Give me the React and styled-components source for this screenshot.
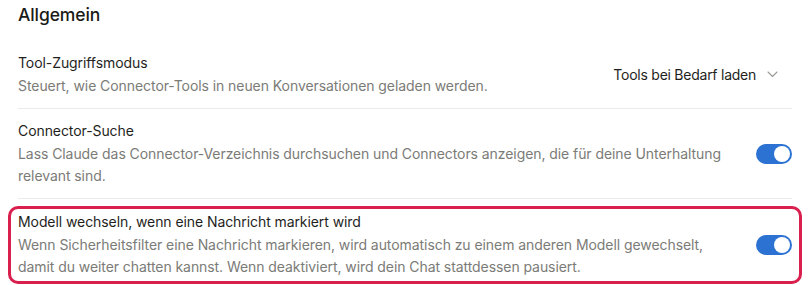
import React, { useState } from "react";
import styled, { createGlobalStyle } from "styled-components";

const Global = createGlobalStyle`
  html, body { margin: 0; padding: 0; background: #ffffff; }
  body { font-family: Inter, "Noto Sans", sans-serif; -webkit-font-smoothing: antialiased; }
`;

const Page = styled.div`
  width: 810px;
  padding: 3px 18px 0 18px;
  box-sizing: border-box;
`;

const Heading = styled.h2`
  margin: 0;
  font-size: 17.5px;
  line-height: 24px;
  font-weight: 500;
  letter-spacing: -0.1px;
  color: #1a1a18;
`;

const List = styled.div`
  margin-top: 14px;
  display: flex;
  flex-direction: column;
`;

const Row = styled.div`
  display: flex;
  align-items: center;
  gap: 24px;
  padding: 11px 0;
  border-bottom: 1px solid #ebebe8;
`;

const FlaggedRow = styled(Row)`
  margin: 7px -10px 0;
  padding: 2px 7px 3px;
  border: 3px solid #d91f4e;
  border-radius: 10px;
`;

const Text = styled.div`
  flex: 1;
  min-width: 0;
`;

const Title = styled.div`
  font-size: 14px;
  line-height: 22px;
  letter-spacing: -0.08px;
  color: #1f1f1d;
  margin-bottom: 1px;
`;

const Desc = styled.div`
  font-size: 14px;
  line-height: 22px;
  letter-spacing: -0.07px;
  color: #7b7b77;
`;

const Select = styled.button`
  display: flex;
  align-items: center;
  gap: 11px;
  border: none;
  background: transparent;
  padding: 0 14px 0 0;
  font: inherit;
  font-size: 14px;
  letter-spacing: -0.25px;
  color: #1f1f1d;
  cursor: pointer;
`;

const Switch = styled.button`
  position: relative;
  width: 36px;
  height: 20px;
  flex: none;
  border: none;
  border-radius: 10px;
  background: ${(p) => (p.$on ? "#2c72d2" : "#c9c9c4")};
  padding: 0;
  cursor: pointer;
  &::after {
    content: "";
    position: absolute;
    top: 2px;
    left: ${(p) => (p.$on ? "18px" : "2px")};
    width: 16px;
    height: 16px;
    border-radius: 50%;
    background: #ffffff;
  }
`;

const Chevron = () => (
  <svg width="11" height="7" viewBox="0 0 11 7" fill="none">
    <path d="M1 1l4.5 4.5L10 1" stroke="#9a9a95" strokeWidth="1.1" strokeLinecap="round" strokeLinejoin="round" />
  </svg>
);

export default function App() {
  const [a, setA] = useState(true);
  const [b, setB] = useState(true);
  return (
    <Page>
      <Global />
      <Heading>Allgemein</Heading>
      <List>
        <Row>
          <Text>
            <Title>Tool-Zugriffsmodus</Title>
            <Desc>Steuert, wie Connector-Tools in neuen Konversationen geladen werden.</Desc>
          </Text>
          <Select>
            Tools bei Bedarf laden
            <Chevron />
          </Select>
        </Row>
        <Row>
          <Text>
            <Title>Connector-Suche</Title>
            <Desc>
              Lass Claude das Connector-Verzeichnis durchsuchen und Connectors anzeigen, die für deine Unterhaltung relevant sind.
            </Desc>
          </Text>
          <Switch $on={a} onClick={() => setA(!a)} aria-label="Connector-Suche" />
        </Row>
        <FlaggedRow>
          <Text>
            <Title>Modell wechseln, wenn eine Nachricht markiert wird</Title>
            <Desc>
              Wenn Sicherheitsfilter eine Nachricht markieren, wird automatisch zu einem anderen Modell gewechselt, damit du weiter chatten kannst. Wenn deaktiviert, wird dein Chat stattdessen pausiert.
            </Desc>
          </Text>
          <Switch $on={b} onClick={() => setB(!b)} aria-label="Modell wechseln" />
        </FlaggedRow>
      </List>
    </Page>
  );
}
